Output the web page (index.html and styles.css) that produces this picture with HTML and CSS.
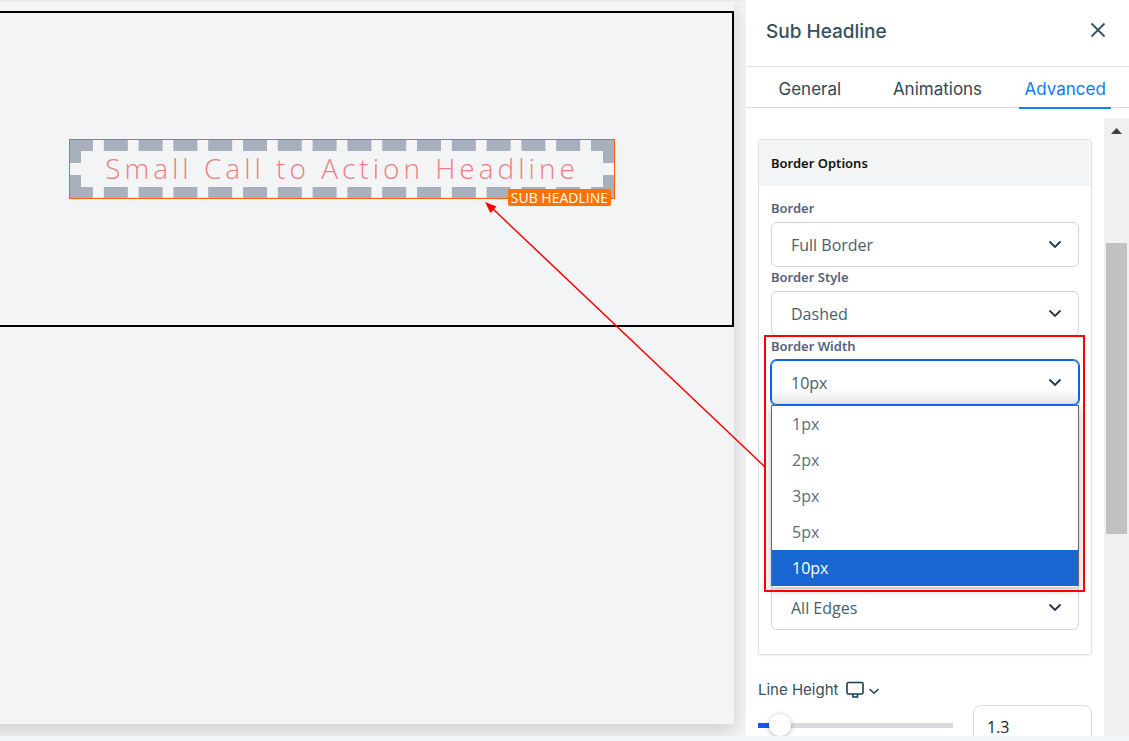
FILE: index.html
```html
<!DOCTYPE html>
<html lang="en">
<head>
<meta charset="utf-8">
<title>Sub Headline settings</title>
<link rel="stylesheet" href="styles.css">
</head>
<body>
<div class="editor">
  <main class="workspace">
    <div class="page">
      <section class="section">
        <div class="headline">
          <h1 class="headline-text">Small Call to Action Headline</h1>
          <span class="headline-tag">SUB HEADLINE</span>
        </div>
      </section>
    </div>
  </main>

  <aside class="panel">
    <header class="panel-header">
      <h2 class="panel-title">Sub Headline</h2>
      <button class="close" type="button" aria-label="Close">
        <svg width="16" height="16" viewBox="0 0 16 16"><path d="M1.500 1.500L14.500 14.500M14.500 1.500L1.500 14.500"/></svg>
      </button>
    </header>
    <nav class="tabs">
      <button class="tab" type="button">General</button>
      <button class="tab" type="button">Animations</button>
      <button class="tab tab-active" type="button">Advanced</button>
    </nav>

    <div class="panel-body">
      <div class="settings">
        <section class="card">
          <h3 class="card-title">Border Options</h3>
          <div class="card-body">
            <div class="field">
              <label class="label" for="border">Border</label>
              <div class="picker">
                <select class="select" id="border"><option>Full Border</option></select>
                <svg class="chevron" width="14" height="9" viewBox="0 0 14 9"><path d="M1.500 1.500L7 7L12.500 1.500"/></svg>
              </div>
            </div>
            <div class="field">
              <label class="label" for="style">Border Style</label>
              <div class="picker">
                <select class="select" id="style"><option>Dashed</option></select>
                <svg class="chevron" width="14" height="9" viewBox="0 0 14 9"><path d="M1.500 1.500L7 7L12.500 1.500"/></svg>
              </div>
            </div>
            <div class="field">
              <label class="label" for="width">Border Width</label>
              <div class="picker">
                <select class="select select-open" id="width"><option>10px</option></select>
                <svg class="chevron" width="14" height="9" viewBox="0 0 14 9"><path d="M1.500 1.500L7 7L12.500 1.500"/></svg>
                <ul class="options" role="listbox" aria-label="Border Width">
                  <li class="option" role="option">1px</li>
                  <li class="option" role="option">2px</li>
                  <li class="option" role="option">3px</li>
                  <li class="option" role="option">5px</li>
                  <li class="option option-selected" role="option" aria-selected="true">10px</li>
                </ul>
              </div>
              <div class="highlight"></div>
              <svg class="arrow" width="281" height="267" viewBox="0 0 281 267">
                <path class="arrow-line" d="M7 7L280 266"/>
                <path class="arrow-head" d="M0 1L11.500 5.500L5.500 12Z"/>
              </svg>
            </div>
            <div class="picker picker-edges">
              <select class="select" aria-label="Edges"><option>All Edges</option></select>
              <svg class="chevron" width="14" height="9" viewBox="0 0 14 9"><path d="M1.500 1.500L7 7L12.500 1.500"/></svg>
            </div>
          </div>
        </section>

        <div class="line-label">
          <label for="line-height">Line Height</label>
          <button class="device" type="button" aria-label="Desktop">
            <svg width="33" height="18" viewBox="0 0 33 18"><rect x="1" y="1.500" width="16" height="11.500" rx="1.500"/><path d="M7 13v3h4.500v-3"/><path class="thin" d="M23.500 8L28 12.200L32.500 8"/></svg>
          </button>
        </div>
        <div class="line-row">
          <input class="slider" id="line-height" type="range" min="0" max="20" step="0.1" value="1.3">
          <input class="number" type="text" value="1.3" aria-label="Line Height value">
        </div>
      </div>
      <div class="scrollbar">
        <svg class="scroll-up" width="11" height="6" viewBox="0 0 11 6"><path d="M5.500 0L11 6H0Z"/></svg>
        <div class="scroll-thumb"></div>
      </div>
    </div>
  </aside>
</div>
</body>
</html>
```
FILE: styles.css
```css
* { box-sizing: border-box; }
body { margin: 0; background: #f1f5f9; font-family: "Open Sans", "Noto Sans", sans-serif; }
h1, h2, h3, ul { margin: 0; padding: 0; }
button { padding: 0; border: 0; background: none; font-family: inherit; cursor: pointer; }
svg { display: block; fill: none; }

.editor { display: grid; grid-template-columns: 1fr 383px; height: 100vh; padding-bottom: 5px; }
.workspace { min-width: 0; overflow: hidden; padding: 1px 12px 12px 0; background: #f3f4f6; border-top: 1px solid #e9eaec; }
.page { height: 100%; margin-left: -50px; padding-top: 9px; background: #f3f4f6; box-shadow: 0 6px 18px rgba(0, 0, 0, 0.16); }
.section { display: flex; justify-content: center; padding: 126px 0; border: 2px solid #000; }
.headline { position: relative; width: 546px; height: 60px; border: 12px dashed #a9b0bd; outline: 1px solid #ff5f00; outline-offset: -1px; }
.headline-text { font-size: 28px; font-weight: 300; line-height: 34px; letter-spacing: 4px; text-align: center; white-space: nowrap; color: #ec7f82; }
.headline-tag { position: absolute; right: -8px; bottom: -19px; padding: 0 3px; border-radius: 2px; background: #ff7200; color: #fff; font-size: 14px; line-height: 17px; white-space: nowrap; }

.panel { position: relative; display: flex; flex-direction: column; min-height: 0; background: #fff; color: #37505c; }
.panel-header { display: flex; flex: none; align-items: center; justify-content: space-between; height: 67px; padding: 0 23px 3px 20px; border-bottom: 1px solid #dfe1e8; }
.panel-title { font: 500 19px/24px Inter, sans-serif; color: #37505c; }
.close { padding-bottom: 4px; }
.close svg { stroke: #37505c; stroke-width: 1.8; }
.tabs { display: grid; flex: none; grid-template-columns: repeat(3, 1fr); justify-items: center; height: 41px; border-bottom: 1px solid #d8dde1; }
.tab { height: 42px; padding: 4px 5px 0; font: 400 17px/20px Inter, sans-serif; color: #2f4853; border-bottom: 2px solid transparent; }
.tab-active { color: #0d7bf5; border-color: #1283f7; }

.panel-body { display: flex; flex: 1; min-height: 0; padding-top: 10px; }
.settings { flex: 1; min-width: 0; padding: 21px 12px 0; }
.card { border: 1px solid #dfe1e8; border-radius: 3px; box-shadow: 0 1px 2px rgba(0, 0, 0, 0.06); }
.card-title { padding: 13px 12px; background: #f3f4f6; font: 600 13px/20px "Noto Sans", sans-serif; color: #111; }
.card-body { padding: 12px 12px 24px; }
.field { position: relative; }
.label { display: block; padding-bottom: 4px; font: 600 13px/20px "Noto Sans", sans-serif; color: #576178; }
.picker { position: relative; }
.select { display: block; width: 100%; height: 45px; padding: 0 19px; appearance: none; border: 1px solid #d1d3dc; border-radius: 6px; background: #fff; font: 400 16px/24px "Open Sans", "Noto Sans", sans-serif; color: #49606b; }
.select-open { border-color: #0b63e6; box-shadow: 0 0 0 1px #0b63e6; background: linear-gradient(#fff 65%, #e6e6e6); }
.chevron { position: absolute; right: 17px; top: 18px; stroke: #20354d; stroke-width: 1.8; pointer-events: none; }
.options { position: absolute; z-index: 2; top: 100%; left: 0; right: 0; border: 1px solid #666; border-bottom-color: #fff; background: #fff; box-shadow: 0 3px 8px rgba(0, 0, 0, 0.25); list-style: none; }
.option { padding: 0 20px; font-size: 16px; line-height: 36px; color: #5b6d7a; }
.option-selected { background: #1967d2; color: #fff; }
.picker-edges { margin-top: 180px; }
.highlight { position: absolute; z-index: 3; top: -1px; left: -7px; right: -6px; height: 257px; border: 2px solid #f00; pointer-events: none; }
.arrow { position: absolute; z-index: 3; top: -135px; right: 313px; pointer-events: none; }
.arrow-line { stroke: #f00; stroke-width: 1.5; }
.arrow-head { fill: #f00; }

.line-label { display: flex; align-items: center; gap: 8px; padding-top: 25px; font: 400 15px/20px Inter, sans-serif; }
.device svg { stroke: #173f50; stroke-width: 1.6; }
.device .thin { stroke-width: 1.4; }
.line-row { display: flex; gap: 20px; height: 31px; margin-top: 5px; overflow: hidden; }
.slider { flex: 1; min-width: 0; height: 22px; margin: 9px 0 0; appearance: none; background: linear-gradient(90deg, #1558ee 22px, #dadae0 22px) center / 100% 5px no-repeat; border-radius: 3px; }
.slider::-webkit-slider-thumb { appearance: none; width: 22px; height: 22px; border-radius: 50%; background: #fff; box-shadow: 0 1px 5px rgba(0, 0, 0, 0.3); }
.number { width: 119px; height: 43px; padding: 0 13px; border: 1px solid #d9dbe2; border-radius: 8px; font: 400 16px/24px "Open Sans", "Noto Sans", sans-serif; color: #222; }

.scrollbar { display: flex; flex-direction: column; width: 25px; padding: 10px 2px 0; background: #f0f0f0; }
.scroll-up { align-self: center; fill: #404040; }
.scroll-thumb { height: 291px; margin-top: 109px; background: #c1c1c1; }
```
